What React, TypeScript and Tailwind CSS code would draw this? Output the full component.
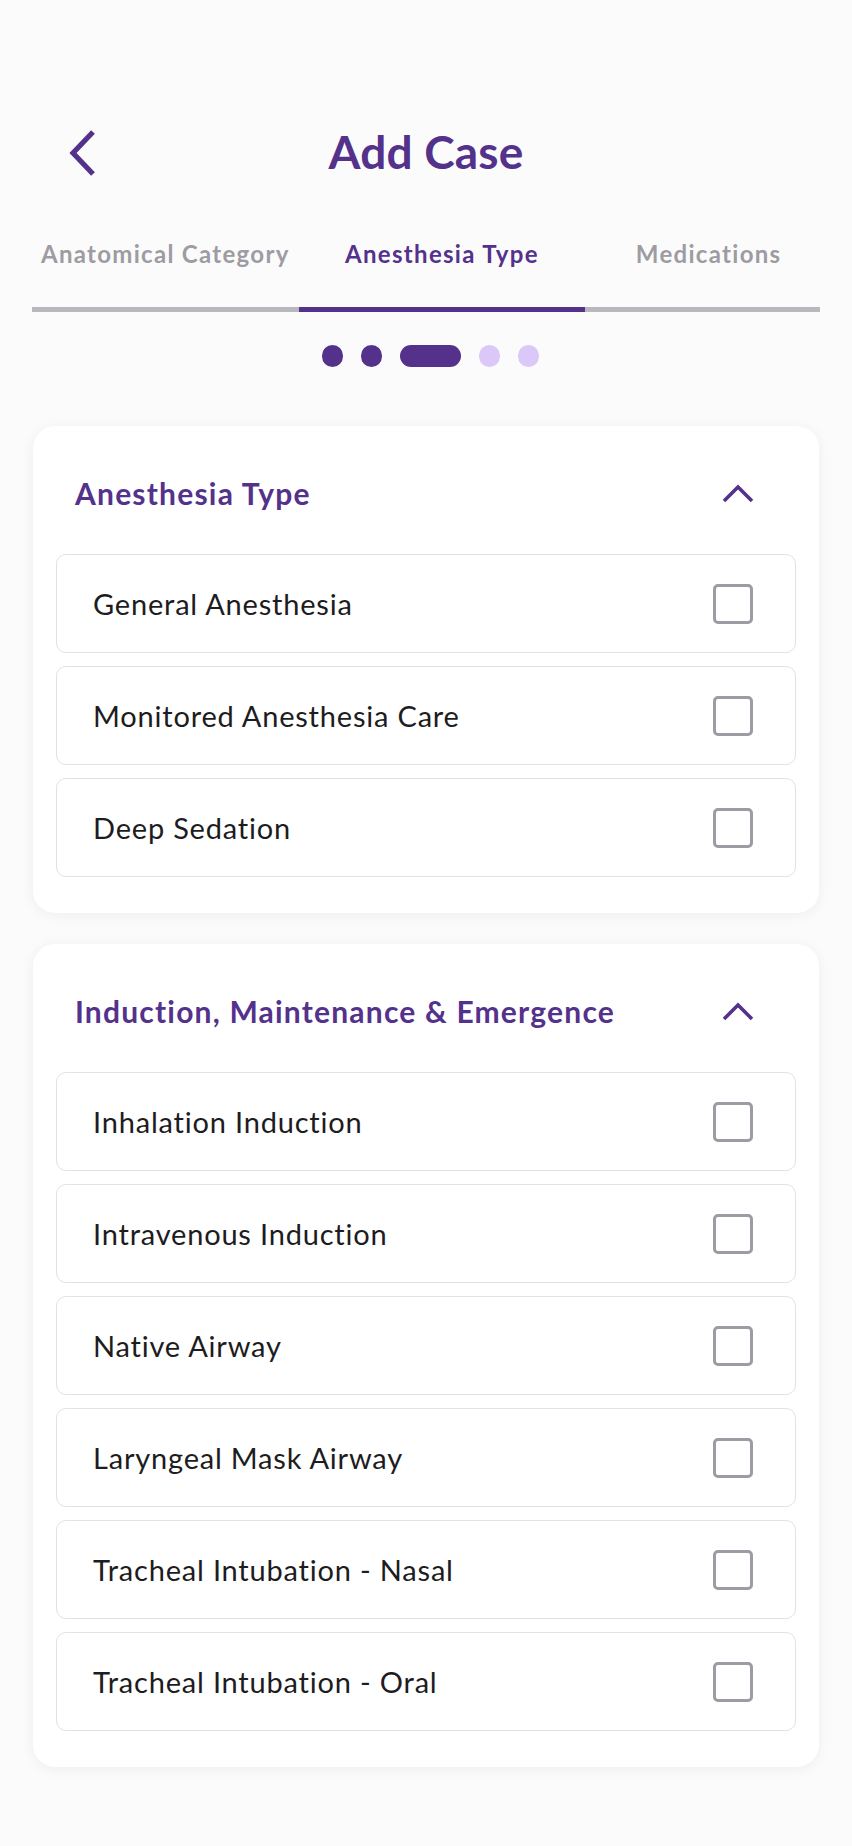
import { useState } from "react";

const PURPLE = "#54318b";

type Section = { title: string; items: string[] };

const sections: Section[] = [
  {
    title: "Anesthesia Type",
    items: ["General Anesthesia", "Monitored Anesthesia Care", "Deep Sedation"],
  },
  {
    title: "Induction, Maintenance & Emergence",
    items: [
      "Inhalation Induction",
      "Intravenous Induction",
      "Native Airway",
      "Laryngeal Mask Airway",
      "Tracheal Intubation - Nasal",
      "Tracheal Intubation - Oral",
    ],
  },
];

const tabs = [
  { label: "Anatomical Category", w: "w-[267px]" },
  { label: "Anesthesia Type", w: "w-[287px]" },
  { label: "Medications", w: "w-[235px] pl-[12px]" },
];

function CheckRow({ label }: { label: string }) {
  const [checked, setChecked] = useState(false);
  return (
    <button
      onClick={() => setChecked(!checked)}
      className="h-[99px] w-full flex items-center justify-between pl-[36px] pr-[42px] bg-white border border-[#e2e1e7] rounded-[10px] text-left"
    >
      <span className="text-[29px] tracking-[0.8px] text-[#1d1c21]">{label}</span>
      <span
        className={
          "w-[40px] h-[40px] rounded-[5px] border-[3.5px] " +
          (checked ? "border-[#54318b] bg-[#54318b]" : "border-[#9d9ba3] bg-white")
        }
      />
    </button>
  );
}

function SectionCard({ section }: { section: Section }) {
  return (
    <div className="bg-white rounded-[22px] shadow-[0_2px_14px_rgba(0,0,0,0.06)] px-[23px] pt-[50px] pb-[36px]">
      <div className="h-[34px] flex items-center justify-between pl-[19px] pr-[41px]">
        <h2 className="text-[30px] font-bold tracking-[1.2px]" style={{ color: PURPLE }}>
          {section.title}
        </h2>
        <svg width="34" height="22" viewBox="0 0 34 22" fill="none">
          <polyline points="3,19 17,5 31,19" stroke={PURPLE} strokeWidth="3.6" />
        </svg>
      </div>
      <div className="mt-[44px] flex flex-col gap-[13px]">
        {section.items.map((it) => (
          <CheckRow key={it} label={it} />
        ))}
      </div>
    </div>
  );
}

export default function App() {
  return (
    <div className="min-h-[1846px] bg-[#fbfbfb] font-['Lato',sans-serif]">
      <div className="h-[103px]" />

      {/* Cabecera */}
      <div className="relative h-[96px] flex items-center justify-center">
        <button className="absolute left-[66px] top-[25px]">
          <svg width="32" height="50" viewBox="0 0 32 50" fill="none">
            <polyline points="27,4 7,25 27,46" stroke={PURPLE} strokeWidth="5.2" />
          </svg>
        </button>
        <h1 className="text-[46px] font-bold tracking-[0.2px]" style={{ color: PURPLE }}>
          Add Case
        </h1>
      </div>

      {/* Pestañas */}
      <div className="mx-[32px] mt-[40px] flex">
        {tabs.map((t, i) => (
          <div
            key={t.label}
            className={
              t.w +
              " pb-[38px] text-center border-b-[5px] " +
              (i === 1 ? "border-[#54318b]" : "border-[#b8b7bd]")
            }
          >
            <span
              className={
                "text-[24px] leading-[30px] tracking-[1.3px] font-bold " +
                (i === 1 ? "text-[#54318b]" : "text-[#9d9ca2]")
              }
            >
              {t.label}
            </span>
          </div>
        ))}
      </div>

      {/* Indicador de pasos */}
      <div className="mt-[33px] pl-[8px] flex justify-center items-center gap-[18px]">
        <span className="w-[21px] h-[22px] rounded-full bg-[#54318b]" />
        <span className="w-[21px] h-[22px] rounded-full bg-[#54318b]" />
        <span className="w-[61px] h-[22px] rounded-full bg-[#54318b]" />
        <span className="w-[21px] h-[22px] rounded-full bg-[#dbc8f8]" />
        <span className="w-[21px] h-[22px] rounded-full bg-[#dbc8f8]" />
      </div>

      {/* Secciones */}
      <div className="mx-[33px] mt-[59px] flex flex-col gap-[31px] pb-[80px]">
        {sections.map((s) => (
          <SectionCard key={s.title} section={s} />
        ))}
      </div>
    </div>
  );
}
